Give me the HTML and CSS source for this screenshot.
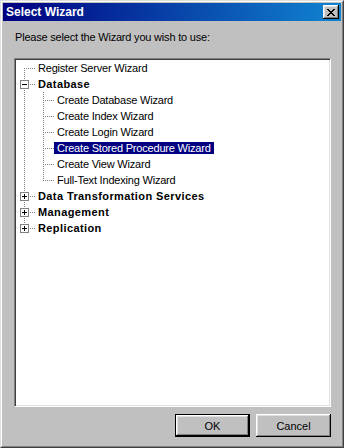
FILE: index.html
```html
<!DOCTYPE html>
<html lang="en">
	<head>
		<meta charset="UTF-8" />
		<meta name="viewport" content="width=device-width, initial-scale=1.0" />
		<title>Select Wizard</title>
		<link rel="stylesheet" href="styles.css">
	</head>
	<body>
		<div class="window">
			<div class="frame">
				<div class="titlebar">
					<span class="title">Select Wizard</span>
					<button class="close" type="button" aria-label="Close">
						<svg width="8" height="7" viewBox="0 0 8 7">
							<path d="M0 0h2v1h1v1h2v-1h1v-1h2v1h-1v1h-1v1h-1v1h1v1h1v1h1v1h-2v-1h-1v-1h-2v1h-1v1h-2v-1h1v-1h1v-1h1v-1h-1v-1h-1v-1h-1z" fill="#000" />
						</svg>
					</button>
				</div>
				<div class="content">
					<p class="prompt">Please select the Wizard you wish to use:</p>
					<div class="tree">
						<div class="row">
							<span class="cell first"></span>
							<span class="label">Register Server Wizard</span>
						</div>
						<div class="row">
							<span class="cell tee">
								<svg class="box" width="9" height="9" viewBox="0 0 9 9">
									<rect x="0.5" y="0.5" width="8" height="8" fill="#fff" stroke="#808080" />
									<path d="M2 4.5h5" stroke="#000" />
								</svg>
							</span>
							<span class="label folder">Database</span>
						</div>
						<div class="row">
							<span class="cell pass"></span>
							<span class="cell tee"></span>
							<span class="label">Create Database Wizard</span>
						</div>
						<div class="row">
							<span class="cell pass"></span>
							<span class="cell tee"></span>
							<span class="label">Create Index Wizard</span>
						</div>
						<div class="row">
							<span class="cell pass"></span>
							<span class="cell tee"></span>
							<span class="label">Create Login Wizard</span>
						</div>
						<div class="row">
							<span class="cell pass"></span>
							<span class="cell tee"></span>
							<span class="label selected">Create Stored Procedure Wizard</span>
						</div>
						<div class="row">
							<span class="cell pass"></span>
							<span class="cell tee"></span>
							<span class="label">Create View Wizard</span>
						</div>
						<div class="row">
							<span class="cell pass"></span>
							<span class="cell last"></span>
							<span class="label">Full-Text Indexing Wizard</span>
						</div>
						<div class="row">
							<span class="cell tee">
								<svg class="box" width="9" height="9" viewBox="0 0 9 9">
									<rect x="0.5" y="0.5" width="8" height="8" fill="#fff" stroke="#808080" />
									<path d="M2 4.5h5M4.5 2v5" stroke="#000" />
								</svg>
							</span>
							<span class="label folder">Data Transformation Services</span>
						</div>
						<div class="row">
							<span class="cell tee">
								<svg class="box" width="9" height="9" viewBox="0 0 9 9">
									<rect x="0.5" y="0.5" width="8" height="8" fill="#fff" stroke="#808080" />
									<path d="M2 4.5h5M4.5 2v5" stroke="#000" />
								</svg>
							</span>
							<span class="label folder">Management</span>
						</div>
						<div class="row">
							<span class="cell last">
								<svg class="box" width="9" height="9" viewBox="0 0 9 9">
									<rect x="0.5" y="0.5" width="8" height="8" fill="#fff" stroke="#808080" />
									<path d="M2 4.5h5M4.5 2v5" stroke="#000" />
								</svg>
							</span>
							<span class="label folder">Replication</span>
						</div>
					</div>
					<div class="buttons">
						<button class="btn default" type="button">OK</button>
						<button class="btn" type="button">Cancel</button>
					</div>
				</div>
			</div>
		</div>
	</body>
</html>
```

FILE: styles.css
```css
body {
	margin: 0;
	font-family: "Liberation Sans", Arial, sans-serif;
	font-size: 11px;
	background: #c0c0c0;
}
.window {
	width: 344px;
	height: 448px;
	box-sizing: border-box;
	border: 1px solid;
	border-color: #dfdfdf #404040 #404040 #dfdfdf;
	background: #c0c0c0;
}
.frame {
	height: 100%;
	box-sizing: border-box;
	border: 1px solid;
	border-color: #fff #808080 #808080 #fff;
	padding: 1px;
	display: flex;
	flex-direction: column;
}
.titlebar {
	height: 18px;
	flex: none;
	display: flex;
	align-items: center;
	justify-content: space-between;
	padding: 0 2px 0 3px;
	background: linear-gradient(to right, #000080, #1084d0);
}
.title {
	color: #fff;
	font-weight: bold;
	font-size: 12px;
}
.close {
	width: 16px;
	height: 14px;
	padding: 0;
	margin: 0;
	display: flex;
	align-items: center;
	justify-content: center;
	background: #c0c0c0;
	border: none;
	box-shadow: inset -1px -1px #000, inset 1px 1px #fff, inset -2px -2px #808080, inset 2px 2px #dfdfdf;
}
.content {
	flex: 1;
	display: flex;
	flex-direction: column;
	padding: 0 10px 8px 11px;
}
.prompt {
	margin: 0;
	padding: 10px 0 0 1px;
	height: 28px;
	line-height: 13px;
	box-sizing: border-box;
	color: #000;
	letter-spacing: -0.2px;
}
.tree {
	height: 349px;
	box-sizing: border-box;
	margin-top: 9px;
	background: #fff;
	border: 1px solid;
	border-color: #808080 #fff #fff #808080;
	box-shadow: inset 1px 1px #404040, inset -1px -1px #dfdfdf;
	padding: 1px;
}
.row {
	height: 16px;
	display: flex;
}
.cell {
	width: 19px;
	height: 16px;
	flex: none;
	display: flex;
	align-items: center;
}
.box {
	margin-left: 4px;
}
.pass {
	background: repeating-linear-gradient(to bottom, #808080 0 1px, transparent 1px 2px) 8px 0 / 1px 16px no-repeat;
}
.tee {
	background:
		repeating-linear-gradient(to bottom, #808080 0 1px, transparent 1px 2px) 8px 0 / 1px 16px no-repeat,
		repeating-linear-gradient(to right, #808080 0 1px, transparent 1px 2px) 8px 8px / 11px 1px no-repeat;
}
.last {
	background:
		repeating-linear-gradient(to bottom, #808080 0 1px, transparent 1px 2px) 8px 0 / 1px 9px no-repeat,
		repeating-linear-gradient(to right, #808080 0 1px, transparent 1px 2px) 8px 8px / 11px 1px no-repeat;
}
.first {
	background:
		repeating-linear-gradient(to bottom, #808080 0 1px, transparent 1px 2px) 8px 8px / 1px 8px no-repeat,
		repeating-linear-gradient(to right, #808080 0 1px, transparent 1px 2px) 8px 8px / 11px 1px no-repeat;
}
.label {
	height: 12px;
	line-height: 13px;
	margin-top: 2px;
	padding: 0 3px 0 3px;
	color: #000;
	white-space: nowrap;
	letter-spacing: -0.2px;
}
.folder {
	font-weight: bold;
	letter-spacing: 0.4px;
}
.selected {
	background: #000080;
	color: #fff;
}
.buttons {
	display: flex;
	justify-content: flex-end;
	gap: 6px;
	margin-top: 7px;
}
.btn {
	width: 75px;
	height: 23px;
	margin: 0;
	padding: 0;
	font-family: "Liberation Sans", Arial, sans-serif;
	font-size: 11px;
	color: #000;
	background: #c0c0c0;
	border: none;
	box-shadow: inset -1px -1px #000, inset 1px 1px #fff, inset -2px -2px #808080, inset 2px 2px #dfdfdf;
}
.default {
	border: 1px solid #000;
}
```
